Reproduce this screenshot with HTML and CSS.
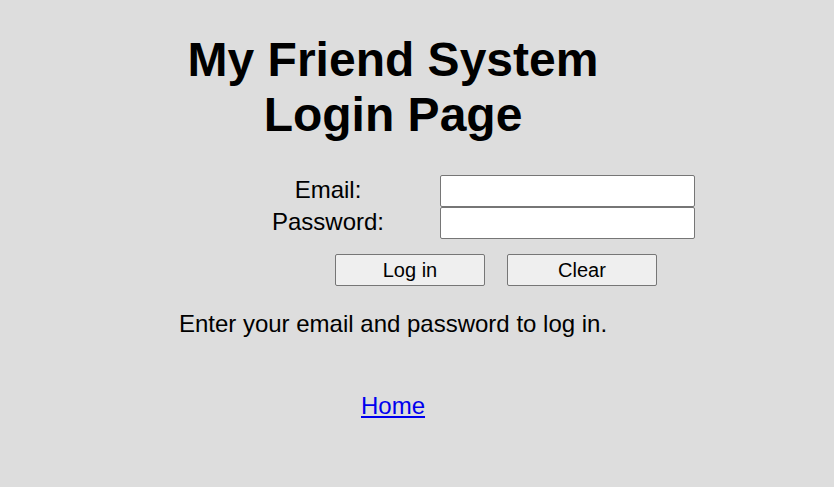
FILE: index.html
```html
<!DOCTYPE html>
<html lang="en">
<head>
<meta charset="utf-8">
<title>My Friend System Login Page</title>
<link rel="stylesheet" href="styles.css">
</head>
<body>
<div class="page">
  <h1 class="title">My Friend System<br>Login Page</h1>
  <form class="login">
    <div class="fields">
      <label class="label" for="email">Email:</label>
      <input class="input" id="email" type="text">
      <label class="label" for="password">Password:</label>
      <input class="input" id="password" type="password">
    </div>
    <div class="actions">
      <button class="btn" type="submit">Log in</button>
      <button class="btn" type="reset">Clear</button>
    </div>
  </form>
  <p class="message">Enter your email and password to log in.</p>
  <p class="home"><a class="home-link" href="#">Home</a></p>
</div>
</body>
</html>
```

FILE: styles.css
```css
html, body {
  background: #dddddd;
}
body {
  margin: 8px;
  font-family: "Liberation Sans", Arial, sans-serif;
  color: #000;
}
.page {
  width: 770px;
  text-align: center;
}
.title {
  font-size: 48px;
  font-weight: bold;
  margin: 24px 0 33px;
  line-height: normal;
}
.login {
  margin: 0;
}
.fields {
  display: grid;
  grid-template-columns: 160px 255px;
  column-gap: 32px;
  margin-left: 240px;
  align-items: center;
}
.label {
  font-size: 24px;
  text-align: center;
  line-height: 28px;
  padding-bottom: 3px;
}
.input {
  box-sizing: border-box;
  width: 255px;
  height: 32px;
  margin: 0;
  border: 1px solid #767676;
  border-radius: 2px;
  background: #fff;
  padding: 2px 4px;
  font-size: 20px;
  font-family: "Liberation Sans", Arial, sans-serif;
}
.actions {
  display: flex;
  gap: 22px;
  margin-top: 15px;
  padding-left: 327px;
}
.btn {
  box-sizing: border-box;
  width: 150px;
  height: 32px;
  margin: 0;
  padding: 0;
  font-size: 20px;
  font-family: "Liberation Sans", Arial, sans-serif;
  color: #000;
  background: #efefef;
  border: 1px solid #767676;
  border-radius: 2px;
}
.message {
  font-size: 24px;
  margin: 24px 0 0;
}
.home {
  font-size: 24px;
  margin: 54px 0 0;
}
.home-link {
  color: #0000ee;
  text-decoration: underline;
}
```
